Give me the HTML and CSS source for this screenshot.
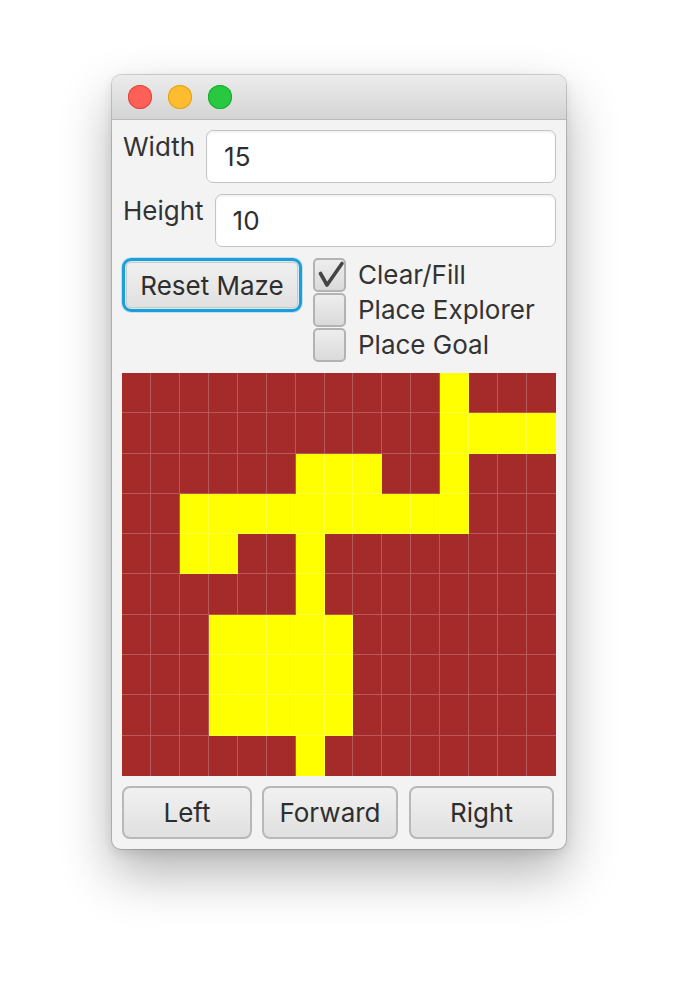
FILE: index.html
```html
<!DOCTYPE html>
<html>
<head>
<meta charset="utf-8">
<link rel="stylesheet" href="styles.css">
</head>
<body>
<div class="stage">
  <div class="window">
    <div class="titlebar">
      <span class="light red"></span>
      <span class="light yellow"></span>
      <span class="light green"></span>
    </div>
    <div class="content">
      <div class="field-row">
        <span class="label">Width</span>
        <div class="field">15</div>
      </div>
      <div class="field-row">
        <span class="label">Height</span>
        <div class="field">10</div>
      </div>
      <div class="controls">
        <button class="btn reset">Reset Maze</button>
        <div class="checks">
          <div class="check-row">
            <span class="box"><svg width="33" height="34" viewBox="0 0 33 34"><path d="M7.5 15.5 L14 27 L29 5.5" fill="none" stroke="#454545" stroke-width="3.6" stroke-linecap="round" stroke-linejoin="round"/></svg></span>
            <span class="check-label">Clear/Fill</span>
          </div>
          <div class="check-row">
            <span class="box"></span>
            <span class="check-label">Place Explorer</span>
          </div>
          <div class="check-row">
            <span class="box"></span>
            <span class="check-label">Place Goal</span>
          </div>
        </div>
      </div>
      <div class="maze">
        <div class="c"></div><div class="c"></div><div class="c"></div><div class="c"></div><div class="c"></div><div class="c"></div><div class="c"></div><div class="c"></div><div class="c"></div><div class="c"></div><div class="c"></div><div class="c y"></div><div class="c"></div><div class="c"></div><div class="c"></div>
        <div class="c"></div><div class="c"></div><div class="c"></div><div class="c"></div><div class="c"></div><div class="c"></div><div class="c"></div><div class="c"></div><div class="c"></div><div class="c"></div><div class="c"></div><div class="c y"></div><div class="c y"></div><div class="c y"></div><div class="c y"></div>
        <div class="c"></div><div class="c"></div><div class="c"></div><div class="c"></div><div class="c"></div><div class="c"></div><div class="c y"></div><div class="c y"></div><div class="c y"></div><div class="c"></div><div class="c"></div><div class="c y"></div><div class="c"></div><div class="c"></div><div class="c"></div>
        <div class="c"></div><div class="c"></div><div class="c y"></div><div class="c y"></div><div class="c y"></div><div class="c y"></div><div class="c y"></div><div class="c y"></div><div class="c y"></div><div class="c y"></div><div class="c y"></div><div class="c y"></div><div class="c"></div><div class="c"></div><div class="c"></div>
        <div class="c"></div><div class="c"></div><div class="c y"></div><div class="c y"></div><div class="c"></div><div class="c"></div><div class="c y"></div><div class="c"></div><div class="c"></div><div class="c"></div><div class="c"></div><div class="c"></div><div class="c"></div><div class="c"></div><div class="c"></div>
        <div class="c"></div><div class="c"></div><div class="c"></div><div class="c"></div><div class="c"></div><div class="c"></div><div class="c y"></div><div class="c"></div><div class="c"></div><div class="c"></div><div class="c"></div><div class="c"></div><div class="c"></div><div class="c"></div><div class="c"></div>
        <div class="c"></div><div class="c"></div><div class="c"></div><div class="c y"></div><div class="c y"></div><div class="c y"></div><div class="c y"></div><div class="c y"></div><div class="c"></div><div class="c"></div><div class="c"></div><div class="c"></div><div class="c"></div><div class="c"></div><div class="c"></div>
        <div class="c"></div><div class="c"></div><div class="c"></div><div class="c y"></div><div class="c y"></div><div class="c y"></div><div class="c y"></div><div class="c y"></div><div class="c"></div><div class="c"></div><div class="c"></div><div class="c"></div><div class="c"></div><div class="c"></div><div class="c"></div>
        <div class="c"></div><div class="c"></div><div class="c"></div><div class="c y"></div><div class="c y"></div><div class="c y"></div><div class="c y"></div><div class="c y"></div><div class="c"></div><div class="c"></div><div class="c"></div><div class="c"></div><div class="c"></div><div class="c"></div><div class="c"></div>
        <div class="c"></div><div class="c"></div><div class="c"></div><div class="c"></div><div class="c"></div><div class="c"></div><div class="c y"></div><div class="c"></div><div class="c"></div><div class="c"></div><div class="c"></div><div class="c"></div><div class="c"></div><div class="c"></div><div class="c"></div>
      </div>
      <div class="nav">
        <button class="btn nav-left">Left</button>
        <button class="btn nav-forward">Forward</button>
        <button class="btn nav-right">Right</button>
      </div>
    </div>
  </div>
</div>
</body>
</html>
```

FILE: styles.css
```css
* { box-sizing: border-box; }
html, body { margin: 0; padding: 0; background: #ffffff; }
body {
  font-family: "Inter", "Liberation Sans", sans-serif;
  color: #333333;
}
.stage {
  padding: 75px 0 140px 112px;
}
.window {
  width: 454px;
  border-radius: 9px;
  overflow: hidden;
  background: #f3f3f3;
  box-shadow: 0 0 0 1px rgba(0,0,0,0.16), 0 24px 52px rgba(0,0,0,0.30), 0 4px 12px rgba(0,0,0,0.10);
}
.titlebar {
  height: 45px;
  display: flex;
  align-items: center;
  gap: 16px;
  padding-left: 16px;
  padding-bottom: 1px;
  background: linear-gradient(#ececec, #d4d4d4);
  border-bottom: 1px solid #b9b9b9;
}
.light {
  width: 24px;
  height: 24px;
  border-radius: 50%;
  display: block;
}
.red { background: #fe5f57; box-shadow: inset 0 0 0 1px #e2463f; }
.yellow { background: #febc2e; box-shadow: inset 0 0 0 1px #e1a116; }
.green { background: #28c840; box-shadow: inset 0 0 0 1px #14ae2b; }

.content {
  padding: 10px;
  display: flex;
  flex-direction: column;
}
.field-row {
  display: flex;
  align-items: flex-start;
  gap: 11px;
  height: 53px;
  margin-bottom: 11px;
}
.label {
  font-size: 26px;
  line-height: 31px;
  padding-left: 1px;
  padding-top: 1px;
}
.field {
  flex: 1;
  height: 53px;
  background: #ffffff;
  border: 1px solid #c3c3c3;
  border-radius: 7px;
  box-shadow: inset 0 2px 2px rgba(0,0,0,0.05);
  font-size: 26px;
  line-height: 51px;
  padding-left: 17px;
  color: #2e2e2e;
}
.controls {
  display: flex;
  gap: 11px;
  height: 105px;
  margin-bottom: 10px;
}
.btn {
  font-family: "Inter", "Liberation Sans", sans-serif;
  font-size: 26px;
  color: #2e2e2e;
  background: linear-gradient(#f1f1f1, #e0e0e0);
  border: 2px solid #b8b8b8;
  border-radius: 8px;
  padding: 0;
  margin: 0;
}
.reset {
  width: 180px;
  height: 54px;
  border: 3px solid #1c9ed8;
  border-radius: 9px;
  box-shadow: inset 0 0 0 1px #d6eaf4, inset 0 0 0 2px #c9c9c9, 0 0 0 1px rgba(28,158,216,0.22);
}
.checks {
  display: flex;
  flex-direction: column;
}
.check-row {
  display: flex;
  align-items: flex-start;
  gap: 12px;
  height: 35px;
}
.box {
  width: 33px;
  height: 34px;
  border: 2px solid #b3b3b3;
  border-radius: 5px;
  background: linear-gradient(#eeeeee, #dadada);
  display: block;
  position: relative;
}
.box svg {
  position: absolute;
  left: -2px;
  top: -2px;
}
.check-label {
  font-size: 26px;
  line-height: 34px;
}
.maze {
  width: 434px;
  height: 403px;
  display: grid;
  grid-template-columns: repeat(15, 1fr);
  grid-template-rows: repeat(10, 1fr);
  margin-bottom: 10px;
}
.c {
  background: #a52a2a;
  border-right: 1px solid rgba(255,255,255,0.22);
  border-bottom: 1px solid rgba(255,255,255,0.22);
}
.c:nth-child(15n) { border-right: none; }
.c:nth-last-child(-n+15) { border-bottom: none; }
.c.y { background: #ffff00; }
.nav {
  display: flex;
  height: 53px;
}
.nav .btn { height: 53px; }
.nav-left { width: 130px; margin-right: 10px; }
.nav-forward { width: 136px; margin-right: 11px; }
.nav-right { width: 145px; }
```
